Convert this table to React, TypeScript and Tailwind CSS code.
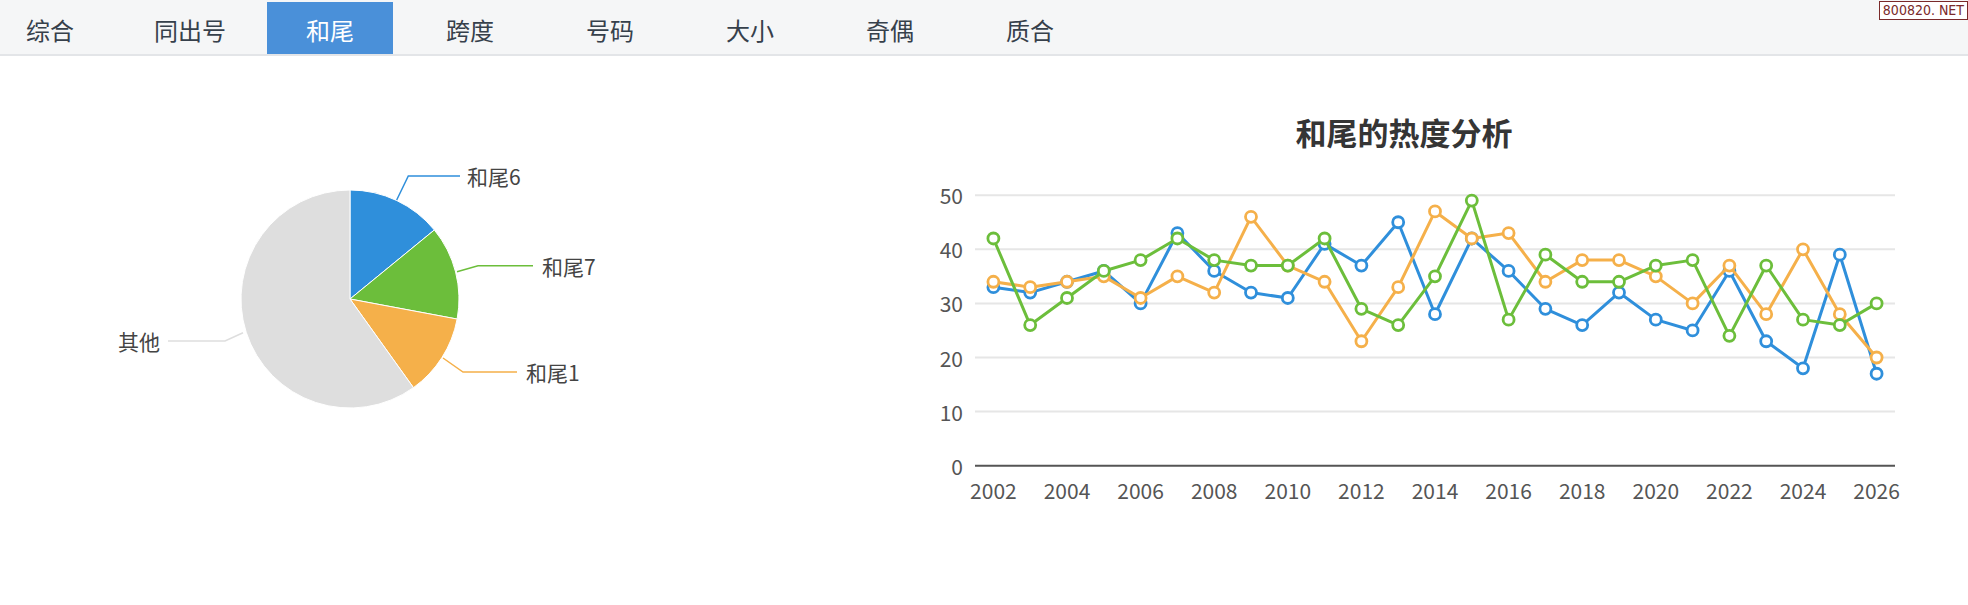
import React from 'react';

const FONT = { fontFamily: "'Microsoft YaHei', 'Noto Sans CJK SC', 'Noto Sans', sans-serif" };

const TABS = ['综合', '同出号', '和尾', '跨度', '号码', '大小', '奇偶', '质合'];
const ACTIVE = '和尾';

const BLUE = '#2f8fdb';
const GREEN = '#6cbe3b';
const ORANGE = '#f5b04a';
const GRAY = '#dedede';

const YEARS = Array.from({ length: 25 }, (_, i) => 2002 + i);
const SERIES = [
  { color: BLUE, data: [33, 32, 34, 36, 30, 43, 36, 32, 31, 41, 37, 45, 28, 42, 36, 29, 26, 32, 27, 25, 36, 23, 18, 39, 17] },
  { color: ORANGE, data: [34, 33, 34, 35, 31, 35, 32, 46, 37, 34, 23, 33, 47, 42, 43, 34, 38, 38, 35, 30, 37, 28, 40, 28, 20] },
  { color: GREEN, data: [42, 26, 31, 36, 38, 42, 38, 37, 37, 42, 29, 26, 35, 49, 27, 39, 34, 34, 37, 38, 24, 37, 27, 26, 30] },
];

// plot area in page coords
const X0 = 975;
const X1 = 1895;
const Y_ZERO = 465.7;
const PER = 5.41;
const xAt = (i: number) => X0 + ((X1 - X0) / 25) * (i + 0.5);
const yAt = (v: number) => Y_ZERO - v * PER;

// pie
const CX = 350;
const CY = 299;
const R = 109;
const pt = (deg: number) => {
  const a = (deg * Math.PI) / 180;
  return [CX + R * Math.sin(a), CY - R * Math.cos(a)];
};
const slice = (a0: number, a1: number) => {
  const [x0, y0] = pt(a0);
  const [x1, y1] = pt(a1);
  const large = a1 - a0 > 180 ? 1 : 0;
  return `M${CX},${CY} L${x0},${y0} A${R},${R} 0 ${large} 1 ${x1},${y1} Z`;
};

const SLICES = [
  { color: BLUE, a0: 0, a1: 50.7, label: '和尾6', line: '396.7,200 408.3,176 460,176', tx: 467, ty: 176, anchor: 'start' },
  { color: GREEN, a0: 50.7, a1: 100.6, label: '和尾7', line: '457,271.7 478,265.7 533,265.7', tx: 542, ty: 265.7, anchor: 'start' },
  { color: ORANGE, a0: 100.6, a1: 144.4, label: '和尾1', line: '443,358 463,372 517,372', tx: 526, ty: 372, anchor: 'start' },
  { color: GRAY, a0: 144.4, a1: 360, label: '其他', line: '243,332.7 225,341 168,341', tx: 160, ty: 341, anchor: 'end' },
];

function PieChart() {
  return (
    <svg width={840} height={549} viewBox="0 56 840 549">
      {SLICES.map((s) => (
        <path key={s.label} d={slice(s.a0, s.a1)} fill={s.color} stroke="#fff" strokeWidth={1} />
      ))}
      {SLICES.map((s) => (
        <g key={s.label + 'l'}>
          <polyline points={s.line} fill="none" stroke={s.color} strokeWidth={1.5} />
          <text
            x={s.tx}
            y={s.ty}
            textAnchor={s.anchor as 'start' | 'end'}
            dominantBaseline="central"
            fontSize={21}
            fill="#444"
          >
            {s.label}
          </text>
        </g>
      ))}
    </svg>
  );
}

function LineChart() {
  return (
    <svg width={1128} height={453} viewBox="840 152 1128 453">
      {[10, 20, 30, 40, 50].map((v) => (
        <line key={v} x1={X0} x2={X1} y1={yAt(v)} y2={yAt(v)} stroke="#e6e6e6" strokeWidth={2} />
      ))}
      <line x1={X0} x2={X1} y1={Y_ZERO} y2={Y_ZERO} stroke="#555" strokeWidth={2} />
      {[0, 10, 20, 30, 40, 50].map((v) => (
        <text key={v} x={963} y={yAt(v)} textAnchor="end" dominantBaseline="central" fontSize={21} fill="#555">
          {v}
        </text>
      ))}
      {YEARS.map((y, i) =>
        i % 2 === 0 ? (
          <text key={y} x={xAt(i)} y={490} textAnchor="middle" dominantBaseline="central" fontSize={21} fill="#555">
            {y}
          </text>
        ) : null,
      )}
      {SERIES.map((s) => (
        <g key={s.color}>
          <polyline
            points={s.data.map((v, i) => `${xAt(i)},${yAt(v)}`).join(' ')}
            fill="none"
            stroke={s.color}
            strokeWidth={3}
            strokeLinejoin="round"
          />
          {s.data.map((v, i) => (
            <circle key={i} cx={xAt(i)} cy={yAt(v)} r={5.5} fill="#fff" stroke={s.color} strokeWidth={2.8} />
          ))}
        </g>
      ))}
    </svg>
  );
}

export default function App() {
  return (
    <div className="relative w-[1968px] h-[605px] overflow-hidden bg-white" style={FONT}>
      <div className="flex items-end h-[56px] bg-[#f5f6f7] border-b-2 border-[#e3e5e8]">
        <div className="flex gap-[14px] -ml-[13px]">
          {TABS.map((t) => (
            <div
              key={t}
              className={`w-[126px] h-[52px] pt-[3px] leading-[49px] text-center text-[24px] ${
                t === ACTIVE ? 'bg-[#4a90d9] text-white' : 'text-[#36404b]'
              }`}
            >
              {t}
            </div>
          ))}
        </div>
      </div>

      <div
        className="absolute right-0 top-[1px] border border-[#7a2a2a] bg-white px-[3px] text-[14px] leading-[17px] text-[#7a2a2a]"
        style={{ fontFamily: "'Liberation Sans Narrow', 'DejaVu Sans Condensed', sans-serif" }}
      >
        800820. NET
      </div>

      <div className="flex">
        <div className="w-[840px] shrink-0">
          <PieChart />
        </div>
        <div className="flex-1 flex flex-col">
          <div className="pt-[56px] h-[96px] leading-[40px] text-center text-[31px] font-bold text-[#353535]">
            和尾的热度分析
          </div>
          <LineChart />
        </div>
      </div>
    </div>
  );
}
